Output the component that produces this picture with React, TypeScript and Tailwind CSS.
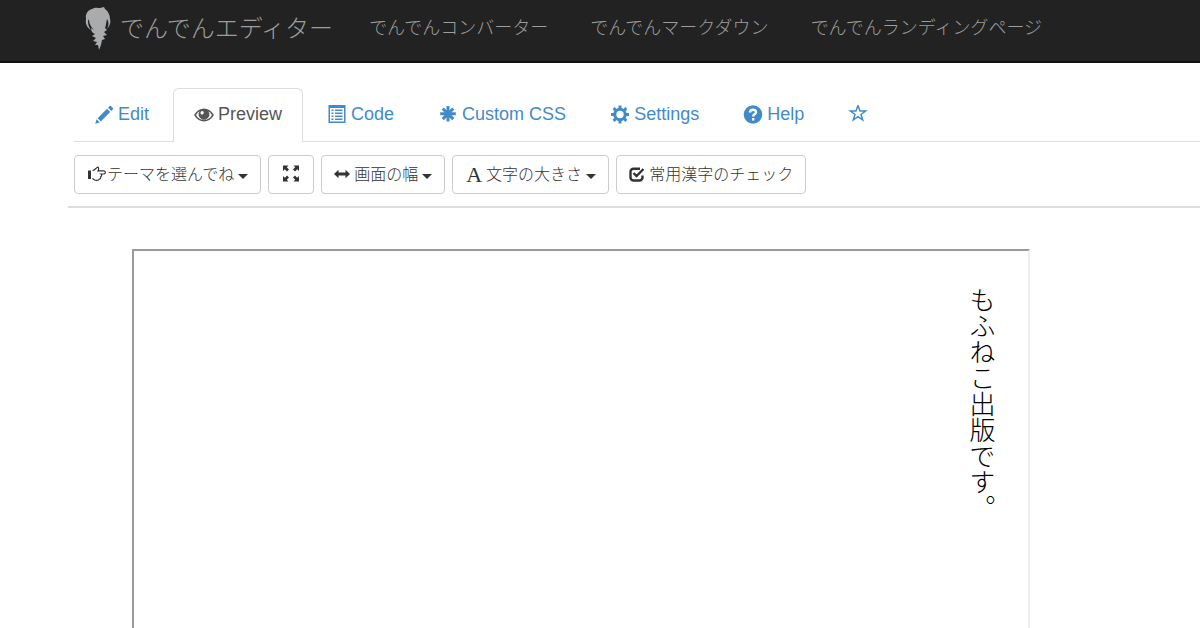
import type { ReactNode } from "react";

const navLinks = [
  "でんでんコンバーター",
  "でんでんマークダウン",
  "でんでんランディングページ",
];

function Icon({
  children,
  className = "h-5 w-5",
  viewBox = "0 0 20 20",
}: {
  children: ReactNode;
  className?: string;
  viewBox?: string;
}) {
  return (
    <svg
      className={`shrink-0 ${className}`}
      viewBox={viewBox}
      fill="currentColor"
      aria-hidden="true"
    >
      {children}
    </svg>
  );
}

function Logo() {
  return (
    <Icon className="h-11 w-7 text-[#a9abad]" viewBox="0 0 28 44">
      <path d="M8 2 C11 0 14 1 16 1 L20 0 L21 2 C24 4 26 8 26 12 C27 15 26 19 23 22 C25 18 25 15 23 12 C22 16 22 19 21 21 L23 23 L20 25 L23 28 L19 29 L21 32 L18 33 L17 38 L15 43 L14 38 L11 38 L13 35 L9 34 L12 31 L8 29 L11 27 C8 26 7 24 7 21 L10 23 C7 20 5 17 5 12 L4 14 C4 18 5 20 7 23 C3 21 1 16 2 12 C1 7 4 3 8 2 Z" />
    </Icon>
  );
}

function PencilIcon() {
  return (
    <Icon>
      <path d="M15.500 1.300 a1.200 1.200 0 0 1 1.700 0 l1.500 1.500 a1.200 1.200 0 0 1 0 1.700 l-1.500 1.500 -3.200 -3.200z M13 3.800 l3.200 3.200 -9.400 9.400 -3.200 -3.200z M2.600 14.200 l3.200 3.200 -4.600 1.400z" />
    </Icon>
  );
}

function EyeIcon() {
  return (
    <Icon>
      <path
        fillRule="evenodd"
        d="M0 10 C3 5.500 6.300 3.500 10 3.500 S17 5.500 20 10 C17 14.500 13.700 16.500 10 16.500 S3 14.500 0 10z M2 10 C4 13.200 6.800 15 10 15 S16 13.200 18 10 C17 8.400 15.700 7 14.300 6.200 A5.300 5.300 0 1 1 5.700 6.200 C4.300 7 3 8.400 2 10z M8 6 a2 2 0 0 0 -1 3.300 a2 2 0 0 0 2.600 -0.700 a2 2 0 0 0 -1.600 -2.600z"
      />
    </Icon>
  );
}

function ListIcon() {
  return (
    <Icon>
      <path
        fillRule="evenodd"
        d="M1.500 0 h17 v18 h-17z M3 3 v13.500 h14 V3z M4.500 4.500 h2 v1.500 h-2z M8 4.500 h7.500 v1.500 H8z M4.500 7.500 h2 v1.500 h-2z M8 7.500 h7.500 v1.500 H8z M4.500 10.500 h2 v1.500 h-2z M8 10.500 h7.500 v1.500 H8z M4.500 13.500 h2 v1.500 h-2z M8 13.500 h7.500 v1.500 H8z"
      />
    </Icon>
  );
}

function AsteriskIcon() {
  return (
    <Icon>
      <path
        d="M10 1 v15.600 M2.200 8.800 h15.600 M4.700 3.500 l10.600 10.600 M15.300 3.500 L4.700 14.100"
        stroke="currentColor"
        strokeWidth="3"
      />
    </Icon>
  );
}

function CogIcon() {
  return (
    <Icon>
      <circle
        cx="10"
        cy="9.500"
        r="5.200"
        fill="none"
        stroke="currentColor"
        strokeWidth="3"
      />
      <path
        d="M10 0.500 v3 M10 15.500 v3 M1 9.500 h3 M16 9.500 h3 M3.600 3.100 l2.100 2.100 M14.300 13.800 l2.100 2.100 M3.600 15.900 l2.100 -2.100 M14.300 5.200 l2.100 -2.100"
        stroke="currentColor"
        strokeWidth="3"
      />
    </Icon>
  );
}

function HelpIcon() {
  return (
    <Icon>
      <circle cx="10" cy="9.500" r="9.300" />
      <path
        d="M7 7.500 C7 3.800 13 3.800 13 7.200 C13 9.200 10.200 9 10.200 11.500 M10.200 13 v2.400"
        fill="none"
        stroke="white"
        strokeWidth="2.400"
      />
    </Icon>
  );
}

function StarIcon() {
  return (
    <Icon>
      <path
        d="M10 0.500 L12 6.100 H17.600 L13 9.500 L14.700 15 L10 11.700 L5.300 15 L7 9.500 L2.400 6.100 H8z"
        fill="none"
        stroke="currentColor"
        strokeWidth="1.500"
      />
    </Icon>
  );
}

function HandIcon() {
  return (
    <Icon>
      <path d="M1 5.500 h3 v8.500 H1z" />
      <path
        d="M5.500 5.500 C7.500 5.500 8.500 3.500 10.500 2.200 C12 2.500 12 4 11 5.800 H17 C18.800 6 18.800 8.800 17 9 H14 C15 9.600 14.800 11.200 13.800 11.600 C14 13 13.200 14 12.200 14.300 C11 15.600 9 15.500 7.500 15 L5.500 13.500"
        fill="none"
        stroke="currentColor"
        strokeWidth="1.200"
      />
    </Icon>
  );
}

function ExpandIcon() {
  return (
    <Icon>
      <path d="M2 0.500 h5.500 L5.800 2.300 8 4.500 6 6.500 3.800 4.300 2 6z M18 0.500 v5.500 L16.200 4.300 14 6.500 12 4.500 14.200 2.300 12.500 0.500z M2 16.500 v-5.500 L3.800 12.700 6 10.500 8 12.500 5.800 14.700 7.500 16.500z M18 16.500 h-5.500 L14.200 14.700 12 12.500 14 10.500 16.200 12.700 18 11z" />
    </Icon>
  );
}

function WidthIcon() {
  return (
    <Icon className="h-4 w-4" viewBox="0 0 16 16">
      <path d="M0 7 L4.500 2.800 V5.600 H11.500 V2.800 L16 7 L11.500 11.200 V8.400 H4.500 V11.200z" />
    </Icon>
  );
}

function CheckIcon() {
  return (
    <Icon className="h-4 w-4" viewBox="0 0 16 16">
      <path
        d="M11 1.700 H4.500 A3 3 0 0 0 1.500 4.700 V10.500 A3 3 0 0 0 4.500 13.500 H10.500 A3 3 0 0 0 13.500 10.500 V8.500 M4.500 6 L7.500 9 L14.500 2"
        fill="none"
        stroke="currentColor"
        strokeWidth="2.400"
      />
    </Icon>
  );
}

function Caret() {
  return (
    <Icon className="mt-1 ml-1 h-[5px] w-[10px]" viewBox="0 0 10 5">
      <path d="M0 0 h10 L5 5z" />
    </Icon>
  );
}

const tabs = [
  { label: "Edit", icon: <PencilIcon /> },
  { label: "Preview", icon: <EyeIcon />, active: true },
  { label: "Code", icon: <ListIcon /> },
  { label: "Custom CSS", icon: <AsteriskIcon /> },
  { label: "Settings", icon: <CogIcon /> },
  { label: "Help", icon: <HelpIcon /> },
  { label: "", icon: <StarIcon /> },
];

function ToolButton({
  children,
  label,
}: {
  children: ReactNode;
  label?: string;
}) {
  return (
    <button
      type="button"
      aria-label={label}
      className="flex h-[39px] items-center rounded border border-[#ccc] bg-white px-3 whitespace-nowrap"
    >
      {children}
    </button>
  );
}

export default function App() {
  return (
    <div className="flex h-screen flex-col overflow-hidden bg-white font-['Liberation_Sans','Noto_Sans_CJK_JP',sans-serif] text-[#333]">
      <header className="flex h-[63px] shrink-0 items-center border-b-2 border-[#101010] bg-[#222] px-20 pb-1 text-[#9d9d9d]">
        <a
          href="#"
          className="flex items-center gap-2 pl-1 text-[24px] font-light whitespace-nowrap"
        >
          <Logo />
          でんでんエディター
        </a>
        <nav className="ml-9 flex gap-[42px] text-[18px] font-light whitespace-nowrap">
          {navLinks.map((link) => (
            <a key={link} href="#">
              {link}
            </a>
          ))}
        </nav>
      </header>

      <nav className="mt-[25px] ml-[74px] flex shrink-0 gap-1 border-b border-[#ddd] text-[18px]">
        {tabs.map((tab) => (
          <a
            key={tab.label}
            href="#"
            aria-label={tab.label || "Star"}
            className={
              tab.active
                ? "-mb-px flex h-[54px] items-center gap-1 rounded-t-md border border-b-0 border-[#ddd] bg-white px-5 pb-[2px] text-[#555]"
                : "flex h-[53px] items-center gap-1 px-5 text-[#428bca]"
            }
          >
            {tab.icon}
            {tab.label}
          </a>
        ))}
      </nav>

      <div className="ml-[68px] flex shrink-0 gap-[7px] border-b-2 border-[#ddd] pt-[13px] pb-3 pl-[6px] text-[16px] font-light">
        <ToolButton>
          <HandIcon />
          テーマを選んでね
          <Caret />
        </ToolButton>
        <ToolButton label="Fullscreen">
          <ExpandIcon />
        </ToolButton>
        <ToolButton>
          <WidthIcon />
          <span className="ml-1">画面の幅</span>
          <Caret />
        </ToolButton>
        <ToolButton>
          <span className="ml-px font-['Liberation_Serif',serif] text-[22px]">
            A
          </span>
          <span className="ml-1">文字の大きさ</span>
          <Caret />
        </ToolButton>
        <ToolButton>
          <CheckIcon />
          <span className="ml-1">常用漢字のチェック</span>
        </ToolButton>
      </div>

      <main className="mt-[41px] mr-[170px] ml-[132px] min-h-0 flex-1 border-2 border-b-0 border-t-[#9a9a9a] border-r-[#eee] border-l-[#9a9a9a] pt-9 pr-8">
        <p className="ml-auto w-fit font-['Noto_Sans_CJK_JP',serif] text-[26px] leading-7 font-light text-black [writing-mode:vertical-rl]">
          もふねこ出版です。
        </p>
      </main>
    </div>
  );
}
